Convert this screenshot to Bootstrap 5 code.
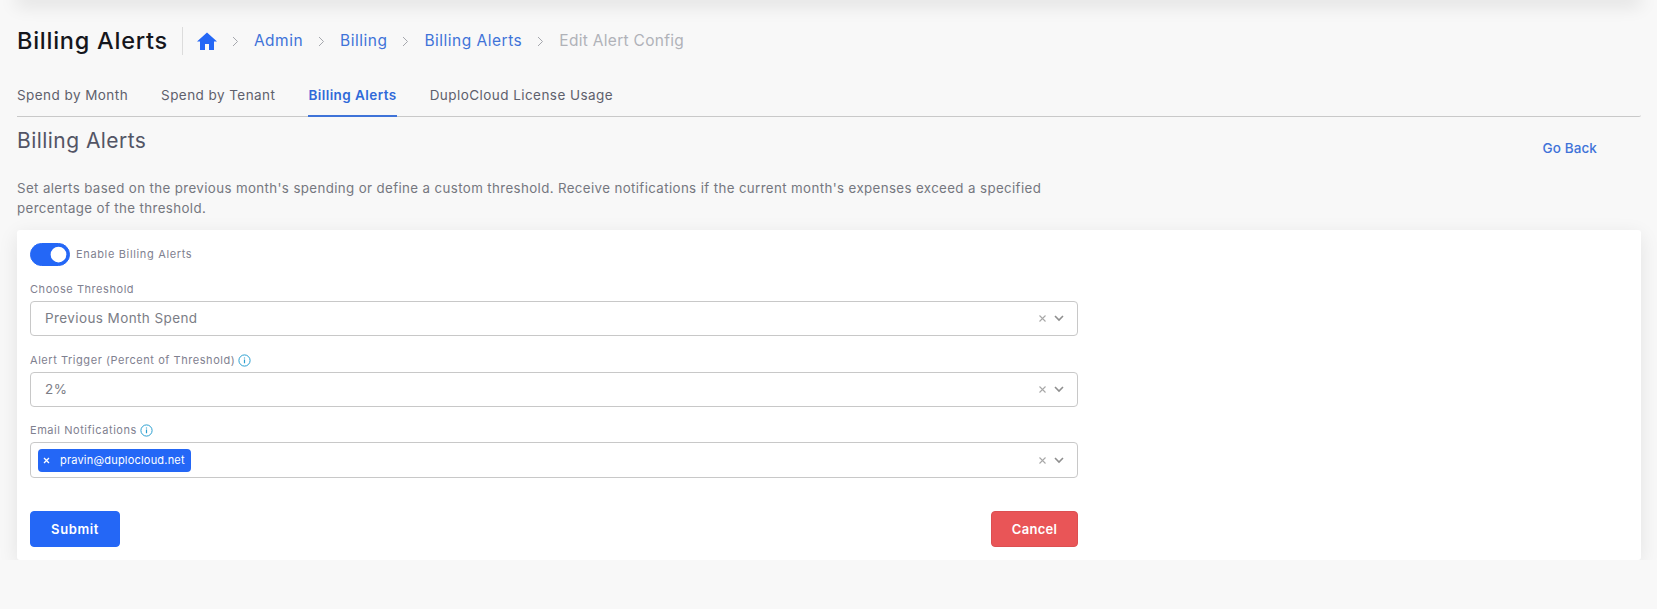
<!DOCTYPE html>
<html lang="en">
<head>
  <meta charset="UTF-8">
  <title>Billing Alerts</title>
  <meta name="viewport" content="width=device-width, initial-scale=1">
  <link href="https://cdn.jsdelivr.net/npm/bootstrap@5.3.0/dist/css/bootstrap.min.css" rel="stylesheet">
  <style>
    body {
      background: #f8f8f8;
      font-family: Inter, "Liberation Sans", sans-serif;
      color: #5c5f6e;
      overflow: hidden;
    }
    a { text-decoration: none; }
    .top-shade {
      height: 14px;
      margin: -14px 16px 0;
      box-shadow: 0 6px 18px rgba(0,0,0,.1);
      background: #f1f1f1;
    }
    .page-wrap { padding: 27px 16px 0 17px; }
    .head-row { height: 28px; }
    .head-title {
      font-size: 23.5px;
      font-weight: 500;
      letter-spacing: .75px;
      line-height: 28px;
      color: #15161c;
      margin: 0;
      padding-right: 14px;
      border-right: 1px solid #dcdcdc;
      margin-right: 14px;
    }
    .breadcrumb { --bs-breadcrumb-margin-bottom: 0; font-size: 15.5px; letter-spacing: .5px; align-items: center; }
    .breadcrumb-item a { color: #3f73d8; }
    .breadcrumb-item + .breadcrumb-item { padding-left: 0; display: flex; align-items: center; }
    .breadcrumb-item + .breadcrumb-item::before { display: none; }
    .crumb-sep { margin: 0 15px; display: block; }
    .breadcrumb-item.active { color: #b0b2b8; letter-spacing: .3px; }
    .tab-bar { margin-top: 29px; border-bottom: 1px solid #c9c9c9; gap: 33px; height: 33px; border-bottom-right-radius: 2px; }
    .tab-bar .nav-link {
      padding: 0 0 9px;
      font-size: 13.5px;
      font-weight: 400;
      letter-spacing: .44px;
      line-height: 22px;
      color: #5e606c;
      height: 33px;
    }
    .tab-bar .nav-link.active { color: #2f69d9; font-weight: 600; border-bottom: 2px solid #3f73d8; }
    .sub-head { margin-top: 11px; height: 40px; }
    .sub-title { font-size: 21px; font-weight: 400; letter-spacing: .45px; line-height: 26px; color: #535565; margin: 0; }
    .back-link { font-size: 13.5px; font-weight: 500; letter-spacing: .1px; color: #3f73d8; margin: 12px 44px 0 0; line-height: 16px; }
    .intro {
      font-size: 13.3px;
      letter-spacing: .38px;
      line-height: 20px;
      color: #75777f;
      max-width: 1040px;
      margin: 10px 0 12px;
    }
    .form-panel {
      border: 0;
      border-radius: 3px;
      box-shadow: 0 5px 20px rgba(0,0,0,.09);
      height: 330px;
      padding: 13px 13px 13px;
    }
    .form-inner { width: 1048px; }
    .form-switch { padding-left: 0; min-height: 0; margin: 0; height: 23px; gap: 6px; }
    .form-switch .form-check-input {
      width: 40px;
      height: 23px;
      margin: 0;
      background-color: #2467f6;
      border-color: #2467f6;
      float: none;
    }
    .form-check-label { font-size: 11px; letter-spacing: .65px; color: #7f8190; }
    .field-label { font-size: 11px; letter-spacing: .55px; line-height: 14px; color: #7f8190; margin: 0 0 5px; display: flex; align-items: center; gap: 3px; }
    .field-gap { margin-top: 16px; }
    .field-gap.first-gap { margin-top: 17px; }
    .pick-box {
      height: 35px;
      border: 1px solid #c8c8c8;
      border-radius: 4px;
      background: #fff;
      padding: 0 14px;
      font-size: 13.5px;
      letter-spacing: .4px;
      color: #7b7d86;
    }
    .pick-box.chips { height: 36px; padding-left: 7px; }
    .pick-tools { gap: 7px; margin-left: auto; margin-right: -1px; }
    .mail-chip {
      background: #2467f6;
      color: #fff;
      font-size: 11px;
      font-weight: 400;
      letter-spacing: .2px;
      height: 23px;
      border-radius: 4px;
      padding: 0 6px 0 5px;
      gap: 10px;
    }
    .form-actions { margin-top: 33px; }
    .btn-go, .btn-stop {
      font-size: 13px;
      font-weight: 600;
      height: 36px;
      border-radius: 4px;
      padding: 0;
      color: #fff;
      line-height: 34px;
    }
    .btn-go { width: 90px; letter-spacing: .6px; background: #2467f6; border-color: #2467f6; }
    .btn-stop { width: 87px; letter-spacing: .3px; background: #e95557; border-color: #dc4f51; }
  </style>
</head>
<body>
  <div class="top-shade"></div>
  <div class="page-wrap">
    <div class="d-flex align-items-center head-row">
      <h1 class="head-title">Billing Alerts</h1>
      <ol class="breadcrumb">
        <li class="breadcrumb-item">
          <a href="#" class="d-block">
            <svg width="20" height="18" viewBox="0 0 20 18" class="d-block"><path d="M10 .5 0 9.5h3V18h5v-6h4v6h5V9.5h3z" fill="#2467f6"/></svg>
          </a>
        </li>
        <li class="breadcrumb-item">
          <svg class="crumb-sep" width="7" height="11" viewBox="0 0 7 11"><path d="M1 1l4.5 4.5L1 10" fill="none" stroke="#a5a7ad" stroke-width="1"/></svg>
          <a href="#">Admin</a>
        </li>
        <li class="breadcrumb-item">
          <svg class="crumb-sep" width="7" height="11" viewBox="0 0 7 11"><path d="M1 1l4.5 4.5L1 10" fill="none" stroke="#a5a7ad" stroke-width="1"/></svg>
          <a href="#">Billing</a>
        </li>
        <li class="breadcrumb-item">
          <svg class="crumb-sep" width="7" height="11" viewBox="0 0 7 11"><path d="M1 1l4.5 4.5L1 10" fill="none" stroke="#a5a7ad" stroke-width="1"/></svg>
          <a href="#">Billing Alerts</a>
        </li>
        <li class="breadcrumb-item active">
          <svg class="crumb-sep" width="7" height="11" viewBox="0 0 7 11"><path d="M1 1l4.5 4.5L1 10" fill="none" stroke="#a5a7ad" stroke-width="1"/></svg>
          Edit Alert Config
        </li>
      </ol>
    </div>

    <ul class="nav tab-bar">
      <li class="nav-item"><a class="nav-link" href="#">Spend by Month</a></li>
      <li class="nav-item"><a class="nav-link" href="#">Spend by Tenant</a></li>
      <li class="nav-item"><a class="nav-link active" href="#">Billing Alerts</a></li>
      <li class="nav-item"><a class="nav-link" href="#">DuploCloud License Usage</a></li>
    </ul>

    <div class="d-flex justify-content-between sub-head">
      <h2 class="sub-title">Billing Alerts</h2>
      <a href="#" class="back-link">Go Back</a>
    </div>
    <p class="intro">Set alerts based on the previous month's spending or define a custom threshold. Receive notifications if the current month's expenses exceed a specified percentage of the threshold.</p>

    <div class="card form-panel">
      <form class="form-inner">
        <div class="form-check form-switch d-flex align-items-center">
          <input class="form-check-input" type="checkbox" role="switch" id="enableAlerts" checked>
          <label class="form-check-label" for="enableAlerts">Enable Billing Alerts</label>
        </div>

        <div class="mt-3">
          <label class="field-label">Choose Threshold</label>
          <div class="pick-box d-flex align-items-center">
            <span>Previous Month Spend</span>
            <span class="pick-tools d-flex align-items-center">
              <svg width="9" height="9" viewBox="0 0 9 9"><path d="M1.5 1.5l6 6M7.5 1.5l-6 6" stroke="#a8a8a8" stroke-width="1.1"/></svg>
              <svg width="10" height="7" viewBox="0 0 10 7"><path d="M1 1l4 4 4-4" fill="none" stroke="#8f8f8f" stroke-width="1.6"/></svg>
            </span>
          </div>
        </div>

        <div class="field-gap first-gap">
          <label class="field-label">Alert Trigger (Percent of Threshold)
            <svg width="13" height="13" viewBox="0 0 13 13"><circle cx="6.5" cy="6.5" r="5.6" fill="none" stroke="#2a9fd0" stroke-width="1"/><path d="M6.5 5.6v3.6M6.5 3.4v1.1" stroke="#2a9fd0" stroke-width="1.2"/></svg>
          </label>
          <div class="pick-box d-flex align-items-center">
            <span>2%</span>
            <span class="pick-tools d-flex align-items-center">
              <svg width="9" height="9" viewBox="0 0 9 9"><path d="M1.5 1.5l6 6M7.5 1.5l-6 6" stroke="#a8a8a8" stroke-width="1.1"/></svg>
              <svg width="10" height="7" viewBox="0 0 10 7"><path d="M1 1l4 4 4-4" fill="none" stroke="#8f8f8f" stroke-width="1.6"/></svg>
            </span>
          </div>
        </div>

        <div class="field-gap">
          <label class="field-label">Email Notifications
            <svg width="13" height="13" viewBox="0 0 13 13"><circle cx="6.5" cy="6.5" r="5.6" fill="none" stroke="#2a9fd0" stroke-width="1"/><path d="M6.5 5.6v3.6M6.5 3.4v1.1" stroke="#2a9fd0" stroke-width="1.2"/></svg>
          </label>
          <div class="pick-box chips d-flex align-items-center">
            <span class="mail-chip d-inline-flex align-items-center">
              <svg width="7" height="7" viewBox="0 0 7 7"><path d="M1 1l5 5M6 1L1 6" stroke="#fff" stroke-width="1.3"/></svg>
              pravin@duplocloud.net
            </span>
            <span class="pick-tools d-flex align-items-center">
              <svg width="9" height="9" viewBox="0 0 9 9"><path d="M1.5 1.5l6 6M7.5 1.5l-6 6" stroke="#a8a8a8" stroke-width="1.1"/></svg>
              <svg width="10" height="7" viewBox="0 0 10 7"><path d="M1 1l4 4 4-4" fill="none" stroke="#8f8f8f" stroke-width="1.6"/></svg>
            </span>
          </div>
        </div>

        <div class="d-flex justify-content-between form-actions">
          <button type="button" class="btn btn-primary btn-go">Submit</button>
          <button type="button" class="btn btn-danger btn-stop">Cancel</button>
        </div>
      </form>
    </div>
  </div>
  <script src="https://cdn.jsdelivr.net/npm/bootstrap@5.3.0/dist/js/bootstrap.bundle.min.js"></script>
</body>
</html>
